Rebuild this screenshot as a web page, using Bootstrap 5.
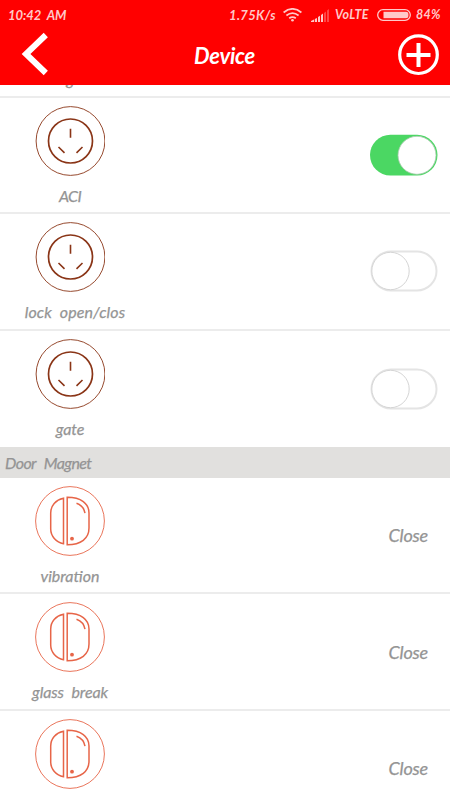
<!DOCTYPE html>
<html lang="en">
<head>
<meta charset="utf-8">
<meta name="viewport" content="width=device-width, initial-scale=1">
<title>Device</title>
<link href="https://cdn.jsdelivr.net/npm/bootstrap@5.3.0/dist/css/bootstrap.min.css" rel="stylesheet">
<style>
body{font-family:Lato,"Open Sans",sans-serif;font-style:italic;color:#949494;height:800px;background:#fff}
svg{display:block;flex:none}
.app-head{background:#f00;height:85px}
.status{height:30px;padding-left:8px;padding-right:8px;font-size:13px;font-weight:700;color:#ffc9c9;line-height:30px}
.clock{letter-spacing:-.05px;word-spacing:3px}
.rate{letter-spacing:.35px;width:46px;margin-right:8px}
.wifi{margin-right:9px}
.signal{margin-right:6px}
.volte{font-size:12.5px;width:35px;margin-right:7px;letter-spacing:.3px}
.battery{margin-right:5px}
.pct{width:26px;font-size:12.5px;letter-spacing:.3px}
.title-bar{height:55px;padding:0 10px 0 21px}
.title-text{font-size:22px;font-weight:700;line-height:51px;letter-spacing:-.25px;margin-left:3px}
.device{height:116.3px;border-bottom:2px solid #ececec;padding-right:12px}
.device-last{height:116px}
.device-info{width:140px;padding-top:8px}
.device-name{font-size:16px;line-height:20px;margin-top:10px;-webkit-text-stroke:.25px;white-space:nowrap}
.name-aci{letter-spacing:-.6px}
.name-lock{word-spacing:4px;letter-spacing:.1px;padding-left:10px}
.name-gate{letter-spacing:-.1px}
.name-vib{letter-spacing:0}
.name-glass{word-spacing:4px;letter-spacing:-.1px}
.cut{height:13px;border-bottom:2px solid #ececec}
.cut .device-name{margin-top:-16px}
.group-head{height:31.5px;background:#e1e0de;padding-left:5px;font-size:16px;line-height:31px;-webkit-text-stroke:.25px;word-spacing:5px;letter-spacing:-.6px}
.state{font-size:18px;margin-right:10px;padding-top:1px;letter-spacing:-.2px;-webkit-text-stroke:.25px}
</style>
<script src="https://cdn.jsdelivr.net/npm/bootstrap@5.3.0/dist/js/bootstrap.bundle.min.js"></script>
</head>
<body class="overflow-hidden d-flex flex-column">
<svg width="0" height="0" class="position-absolute">
<defs>
<symbol id="socket" viewBox="0 0 70 70"><g fill="none" stroke="#8a3517"><circle cx="35.500" cy="35" r="34.400" stroke-width=".9"/><circle cx="35.500" cy="35" r="22" stroke-width="1.700"/><path d="M35.500 22.700v9M23.500 41l6 5.800M47.500 41l-6 5.800" stroke-width="1.600"/></g></symbol>
<symbol id="magnet" viewBox="0 0 70 70"><g fill="none" stroke="#e76548"><circle cx="35" cy="35" r="34.400" stroke-width=".9"/><path d="M28.500 12.300v45.400C21 56.200 15.700 50 15.700 43V27c0-7.500 5-13 12.800-14.700zM32.200 11.300v47.400C46 58.700 54 52.500 54 42V27c0-9.500-8-15.700-21.800-15.700z" stroke-width="1.500"/><path d="M41.500 17.200c5 1.800 7.700 5.200 8.500 10" stroke-width="1.500"/><circle cx="37" cy="52.700" r="1.900" fill="#e76548" stroke="none"/></g></symbol>
<symbol id="off" viewBox="0 0 68 42"><rect x="1.500" y="1.500" width="65" height="39" rx="19.500" fill="#fff" stroke="#e4e4e4" stroke-width="2"/><circle cx="20.500" cy="21" r="18.700" fill="#fff" stroke="#d5d5d5"/></symbol>
</defs>
</svg>
<header class="app-head flex-shrink-0 text-white">
  <div class="status d-flex align-items-center">
    <span class="clock me-auto">10:42 AM</span>
    <span class="rate">1.75K/s</span>
    <svg class="wifi" width="19" height="14" viewBox="0 0 19 14" fill="none" stroke="#ffc9c9" stroke-width="1.700"><path d="M.6 4.500Q9.500-2.800 18.400 4.500M3.400 7.500q6.100-4.900 12.200 0M6.200 10.300q3.300-2.500 6.600 0"/><circle cx="9.500" cy="12.300" r="1.300" fill="#ffc9c9" stroke="none"/></svg>
    <svg class="signal" width="18" height="13" viewBox="0 0 18 13"><path fill="#ffc9c9" d="M0 13v-1l3-1.500V13zM3.800 13v-3l2.200-1v4zM7 13V8l2-1.200V13zM10 13V6l2-1.500V13z"/><path fill="#ff4545" d="M13 13V4l2-1.500V13zM16 13V1.500L18 0v13z"/></svg>
    <span class="volte">VoLTE</span>
    <svg class="battery" width="34" height="12" viewBox="0 0 34 12"><rect x=".7" y=".7" width="32.600" height="10.600" rx="5.300" fill="none" stroke="#ffc9c9" stroke-width="1.300"/><path fill="#ffc9c9" d="M6.500 2.700H29q2.500 0 2.500 3.300T29 9.300H6.500z"/></svg>
    <span class="pct">84%</span>
  </div>
  <div class="title-bar d-flex justify-content-between">
    <svg width="27" height="48" viewBox="0 0 27 48" fill="none" stroke="#fff" stroke-width="6"><path d="M24.800 5L5 24l19.800 19"/></svg>
    <span class="title-text">Device</span>
    <svg width="42" height="50" viewBox="0 0 42 50" fill="none" stroke="#fff"><circle cx="20.500" cy="24.700" r="18.800" stroke-width="3.200"/><path d="M8.500 25h24M20.500 13v24" stroke-width="4"/></svg>
  </div>
</header>
<main>
  <div class="cut overflow-hidden"><div class="device-info p-0 text-center"><div class="device-name name-gate">g</div></div></div>
  <div class="device d-flex justify-content-between align-items-center">
    <div class="device-info align-self-start d-flex flex-column align-items-center"><svg width="70" height="70" overflow="visible"><use href="#socket"/></svg><div class="device-name name-aci">ACI</div></div>
    <svg width="68" height="42" viewBox="0 0 68 42"><rect y=".7" width="67.500" height="40.800" rx="20.400" fill="#4bd763"/><circle cx="47" cy="21.300" r="19" fill="#fff" stroke="#a9c9ae" stroke-width=".8"/></svg>
  </div>
  <div class="device d-flex justify-content-between align-items-center">
    <div class="device-info align-self-start d-flex flex-column align-items-center"><svg width="70" height="70"><use href="#socket"/></svg><div class="device-name name-lock">lock open/clos</div></div>
    <svg width="68" height="42"><use href="#off"/></svg>
  </div>
  <div class="device device-last d-flex justify-content-between align-items-center border-bottom-0">
    <div class="device-info align-self-start d-flex flex-column align-items-center"><svg width="70" height="70"><use href="#socket"/></svg><div class="device-name name-gate">gate</div></div>
    <svg width="68" height="42"><use href="#off"/></svg>
  </div>
  <div class="group-head">Door Magnet</div>
  <div class="device d-flex justify-content-between align-items-center">
    <div class="device-info align-self-start d-flex flex-column align-items-center"><svg width="70" height="70"><use href="#magnet"/></svg><div class="device-name name-vib">vibration</div></div>
    <span class="state">Close</span>
  </div>
  <div class="device d-flex justify-content-between align-items-center">
    <div class="device-info align-self-start d-flex flex-column align-items-center"><svg width="70" height="70"><use href="#magnet"/></svg><div class="device-name name-glass">glass break</div></div>
    <span class="state">Close</span>
  </div>
  <div class="device d-flex justify-content-between align-items-center">
    <div class="device-info align-self-start d-flex flex-column align-items-center"><svg width="70" height="70"><use href="#magnet"/></svg></div>
    <span class="state">Close</span>
  </div>
</main>
</body>
</html>
